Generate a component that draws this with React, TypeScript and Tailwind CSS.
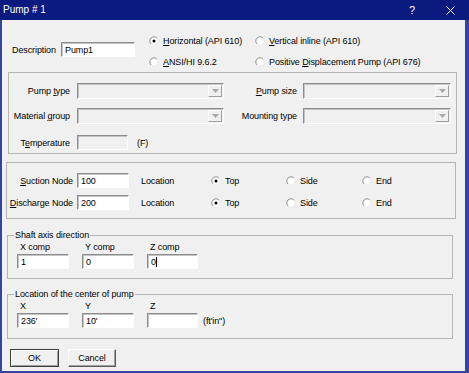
import type { ReactNode } from 'react';

function RadioMark({ checked }: { checked?: boolean }) {
  return (
    <svg width="10" height="10" viewBox="0 0 12 12" className="shrink-0">
      <circle cx="6" cy="6" r="5" fill="#ffffff" />
      <path d="M2.46 9.54 A5 5 0 0 1 9.54 2.46" stroke="#8a8a8a" strokeWidth="1.2" fill="none" />
      <path d="M9.54 2.46 A5 5 0 0 1 2.46 9.54" stroke="#e6e6e6" strokeWidth="1.2" fill="none" />
      {checked && <circle cx="6" cy="6" r="1.8" fill="#000000" />}
    </svg>
  );
}

function RadioOpt({ checked, className = '', children }: { checked?: boolean; className?: string; children: ReactNode }) {
  return (
    <div className={`flex items-center gap-[4px] ${className}`}>
      <RadioMark checked={checked} />
      <span>{children}</span>
    </div>
  );
}

function Acc({ children }: { children: ReactNode }) {
  return <span className="underline underline-offset-1">{children}</span>;
}

function Sunken({ className = '', children }: { className?: string; children?: ReactNode }) {
  return (
    <div
      className={`flex items-center border border-t-[#8c8c8c] border-l-[#8c8c8c] border-r-white border-b-white shadow-[inset_1px_1px_0_#c4c4c4] ${className}`}
    >
      {children}
    </div>
  );
}

function TextBox({ value = '', className = '', caret }: { value?: string; className?: string; caret?: boolean }) {
  return (
    <Sunken className={`bg-white pl-[3px] ${className}`}>
      <span>{value}</span>
      {caret && <span className="w-px h-[10px] bg-black" />}
    </Sunken>
  );
}

function Combo({ className = '' }: { className?: string }) {
  return (
    <Sunken className={`bg-[#f0f0f0] justify-end p-[1px] ${className}`}>
      <div className="w-[14px] h-full flex items-center justify-center border border-t-white border-l-white border-r-[#a0a0a0] border-b-[#a0a0a0]">
        <svg width="7" height="4" viewBox="0 0 7 4">
          <path d="M0 0 H7 L3.5 4 Z" fill="#a8a8a8" />
        </svg>
      </div>
    </Sunken>
  );
}

function Button({ children, isDefault, className = '' }: { children: ReactNode; isDefault?: boolean; className?: string }) {
  const edge = isDefault
    ? 'border border-[#3c3c3c] shadow-[inset_1px_1px_0_#ffffff,inset_-1px_-1px_0_#a0a0a0]'
    : 'border border-t-white border-l-white border-r-[#5a5a5a] border-b-[#5a5a5a] shadow-[inset_-1px_-1px_0_#a0a0a0]';
  return (
    <div className={`h-[18px] flex items-center justify-center bg-[#f0f0f0] ${edge} ${className}`}>
      {children}
    </div>
  );
}

function CoordCol({ label, value, className = '', width = 'w-[52px]', caret }: { label: string; value: string; className?: string; width?: string; caret?: boolean }) {
  return (
    <div className={`flex flex-col ${className}`}>
      <span className="pl-[3px] h-[12px] leading-[12px]">{label}</span>
      <TextBox value={value} caret={caret} className={`mt-[1px] h-[15px] ${width}`} />
    </div>
  );
}

export default function App() {
  return (
    <div className="w-[469px] h-[373px] flex flex-col overflow-hidden font-['Liberation_Sans',Arial,sans-serif] text-[9px] leading-[12px] tracking-[-0.1px] text-black">
      <div className="h-[20px] shrink-0 bg-[#0b1a7e] text-white flex items-center pl-[3px]">
        <span className="text-[10px] tracking-normal">Pump # 1</span>
        <span className="ml-auto text-[11px]">?</span>
        <svg width="9" height="9" viewBox="0 0 9 9" className="ml-[31px] mr-[14px]">
          <path d="M0.5 0.5 L8.5 8.5 M8.5 0.5 L0.5 8.5" stroke="#ffffff" strokeWidth="1" />
        </svg>
      </div>

      <div className="flex-1 flex flex-col bg-[#f0f0f0] border-l-2 border-r-4 border-b-2 border-[#3444a0]">
        <div className="mt-[10px] h-[42px] flex">
          <div className="flex items-center self-center pb-[3px]">
            <span className="ml-[10px] w-[49px]">Description</span>
            <TextBox value="Pump1" className="w-[74px] h-[15px]" />
          </div>
          <div className="ml-[14px] grid grid-cols-[106px_auto] grid-rows-[21px_21px] items-center">
            <RadioOpt checked><Acc>H</Acc>orizontal (API 610)</RadioOpt>
            <RadioOpt><Acc>V</Acc>ertical inline (API 610)</RadioOpt>
            <RadioOpt><Acc>A</Acc>NSI/HI 9.6.2</RadioOpt>
            <RadioOpt>Positive <Acc>D</Acc>isplacement Pump (API 676)</RadioOpt>
          </div>
        </div>

        <div className="ml-[6px] w-[449px] h-[82px] border border-[#b5b5b5] flex flex-col pt-[10px]">
          <div className="h-[16px] flex items-center">
            <span className="w-[61px] text-right">Pump <Acc>t</Acc>ype</span>
            <Combo className="ml-[7px] w-[147px] h-[16px]" />
            <span className="ml-[7px] w-[66px] text-right"><Acc>P</Acc>ump size</span>
            <Combo className="ml-[6px] w-[148px] h-[16px]" />
          </div>
          <div className="mt-[9px] h-[16px] flex items-center">
            <span className="w-[61px] text-right">Material <Acc>g</Acc>roup</span>
            <Combo className="ml-[7px] w-[147px] h-[16px]" />
            <span className="ml-[7px] w-[66px] text-right">Mounting type</span>
            <Combo className="ml-[6px] w-[148px] h-[16px]" />
          </div>
          <div className="mt-[11px] h-[15px] flex items-center">
            <span className="w-[61px] text-right">T<Acc>e</Acc>mperature</span>
            <Sunken className="ml-[7px] w-[51px] h-[15px] bg-[#f0f0f0]" />
            <span className="ml-[9px]">(F)</span>
          </div>
        </div>

        <div className="mt-[8px] ml-[4px] w-[450px] h-[57px] border border-[#b5b5b5] flex flex-col pt-[10px]">
          {[
            { label: 'uction Node', acc: 'S', value: '100' },
            { label: 'ischarge Node', acc: 'D', value: '200' },
          ].map((row, i) => (
            <div key={row.acc} className={`h-[15px] flex items-center ${i ? 'mt-[7px]' : ''}`}>
              <span className="w-[66px] text-right">
                <Acc>{row.acc}</Acc>
                {row.label}
              </span>
              <TextBox value={row.value} className="ml-[4px] w-[52px] h-[15px]" />
              <span className="ml-[12px] w-[70px]">Location</span>
              <RadioOpt checked className="w-[75px]">Top</RadioOpt>
              <RadioOpt className="w-[76px]">Side</RadioOpt>
              <RadioOpt>End</RadioOpt>
            </div>
          ))}
        </div>

        <fieldset className="mt-[10px] ml-[5px] w-[446px] h-[50px] border border-[#b5b5b5]">
          <legend className="ml-[6px] px-[1px] leading-[12px]">Shaft axis direction</legend>
          <div className="flex">
            <CoordCol label="X comp" value="1" className="ml-[9px]" />
            <CoordCol label="Y comp" value="0" className="ml-[13px]" />
            <CoordCol label="Z comp" value="0" caret className="ml-[13px]" width="w-[51px]" />
          </div>
        </fieldset>

        <fieldset className="mt-[9px] ml-[5px] w-[446px] h-[51px] border border-[#b5b5b5]">
          <legend className="ml-[6px] px-[1px] leading-[12px]">Location of the center of pump</legend>
          <div className="flex items-end">
            <CoordCol label="X" value="236'" className="ml-[9px]" />
            <CoordCol label="Y" value="10'" className="ml-[13px]" />
            <CoordCol label="Z" value="" className="ml-[13px]" width="w-[51px]" />
            <span className="ml-[5px] h-[15px] flex items-center">(ft'in")</span>
          </div>
        </fieldset>

        <div className="mt-[10px] flex">
          <Button isDefault className="ml-[8px] w-[49px]">OK</Button>
          <Button className="ml-[9px] w-[48px]">Cancel</Button>
        </div>
      </div>
    </div>
  );
}
